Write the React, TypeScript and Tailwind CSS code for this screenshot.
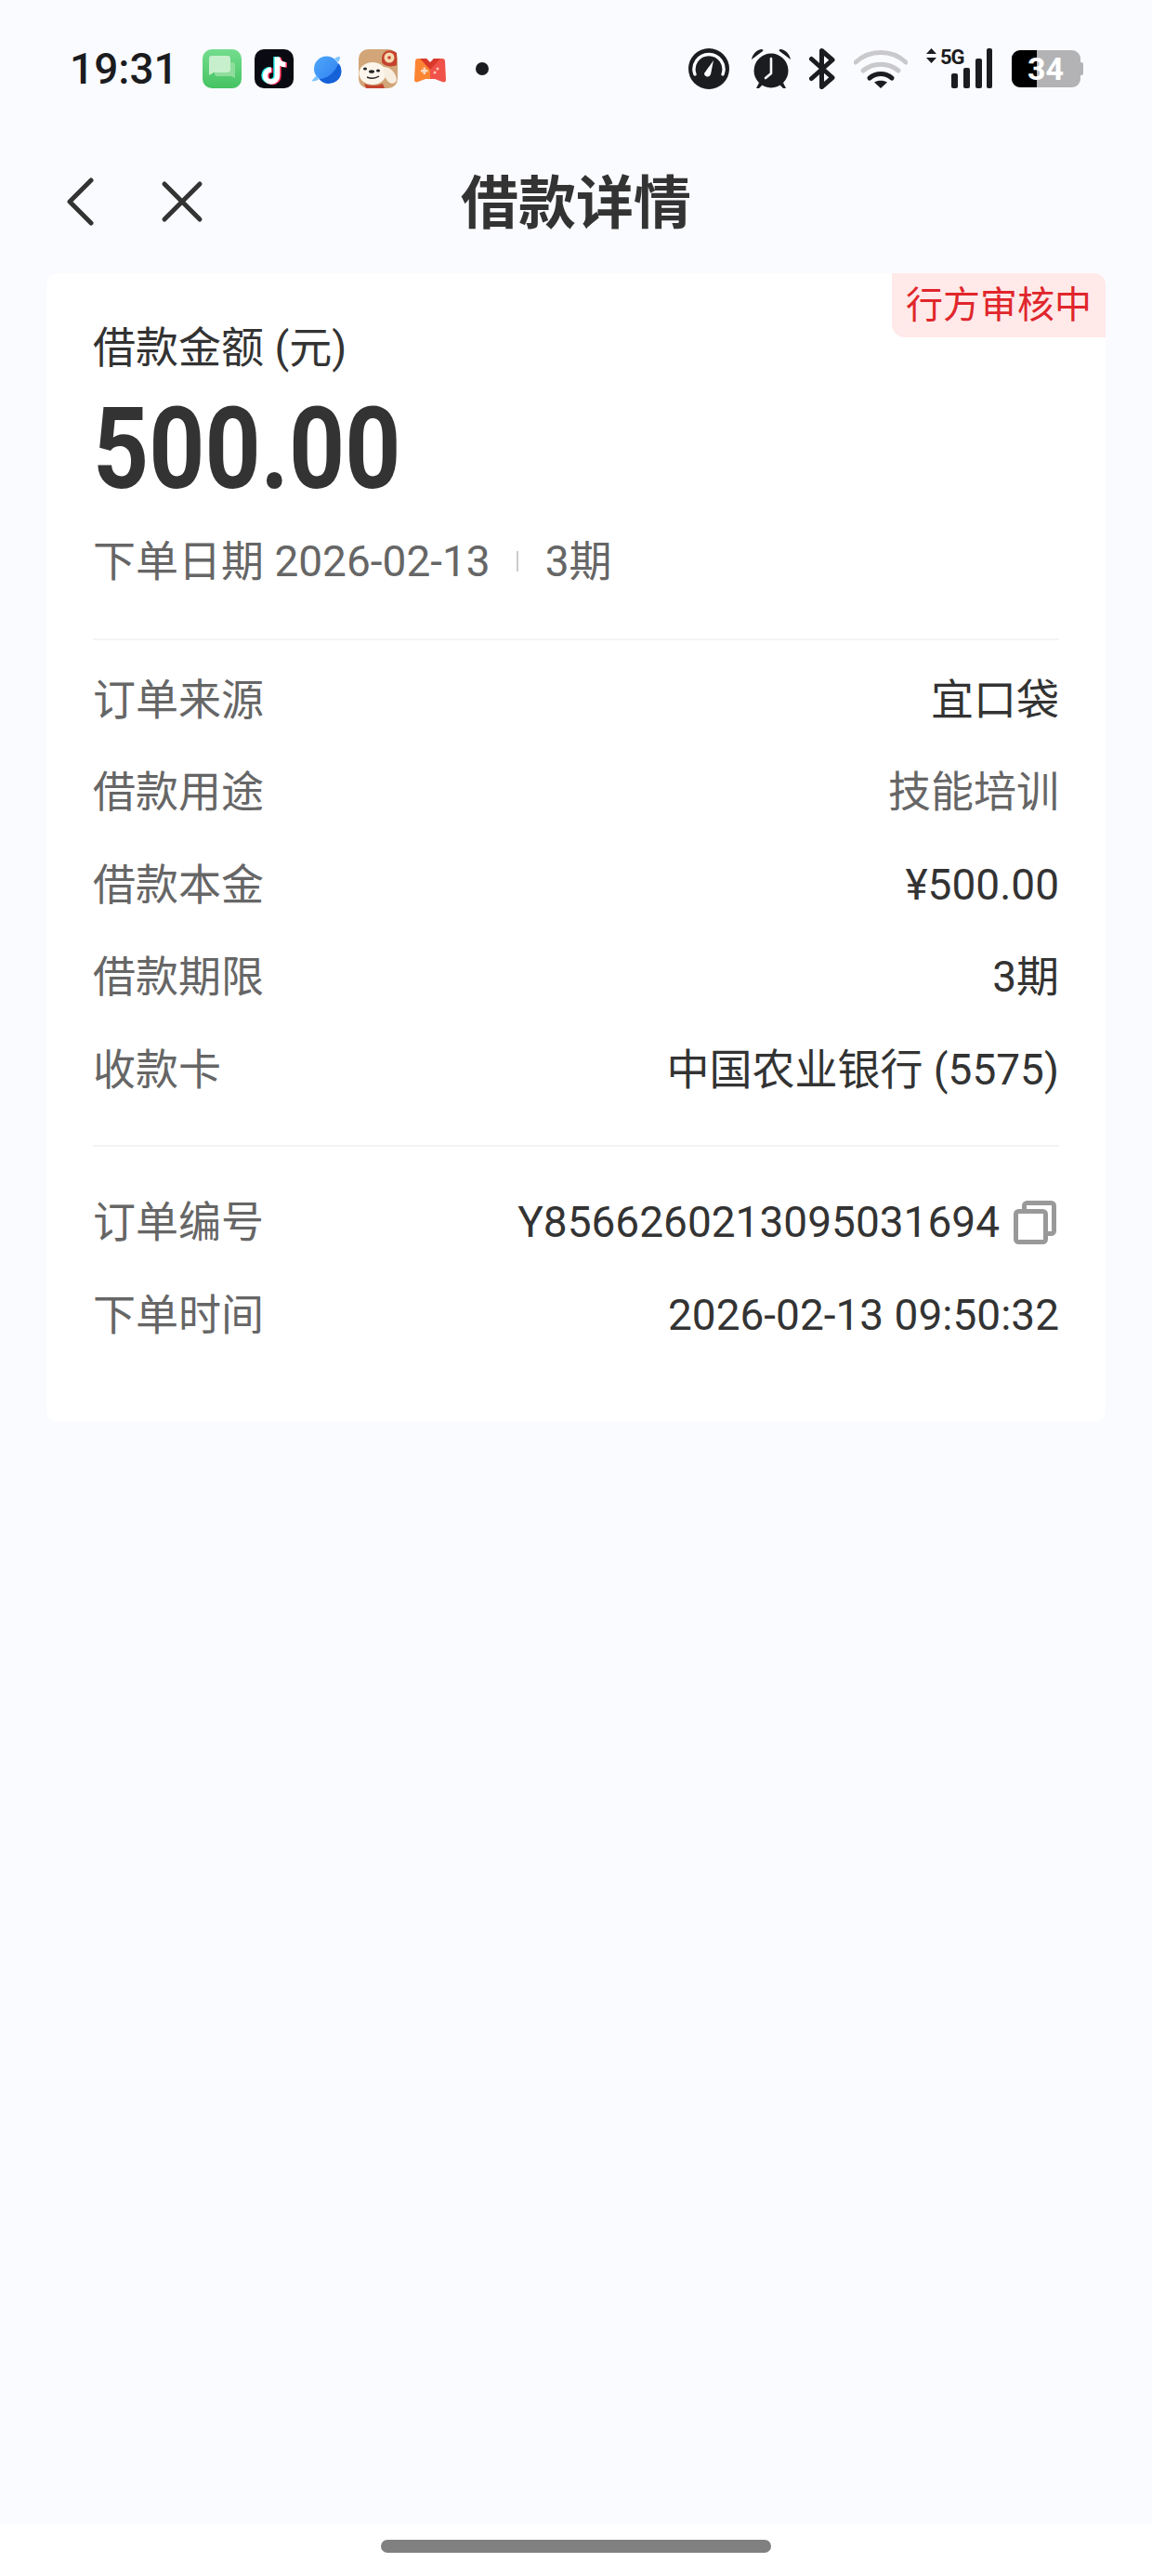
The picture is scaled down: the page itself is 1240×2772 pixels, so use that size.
import { ReactNode } from "react"

const fontStack = "font-['Roboto','Noto_Sans_CJK_SC',sans-serif]"

function AppIcons() {
  return (
    <div className="ml-[26px] flex items-center gap-[14px]">
      {/* Messages */}
      <svg width="42" height="42" viewBox="0 0 42 42">
        <defs>
          <linearGradient id="msg" x1="0" y1="0" x2="0" y2="1">
            <stop offset="0" stopColor="#74dd8e" />
            <stop offset="1" stopColor="#45c362" />
          </linearGradient>
          <linearGradient id="planet" x1="0" y1="0" x2="1" y2="1">
            <stop offset="0" stopColor="#4fa8fb" />
            <stop offset="1" stopColor="#2f7ff0" />
          </linearGradient>
        </defs>
        <rect width="42" height="42" rx="10" fill="url(#msg)" />
        <path d="M29 14h3a3 3 0 0 1 3 3v14l-4-2H16a3 3 0 0 1-3-3v-1h16z" fill="#8fdd9c" />
        <path d="M10 7h17a3 3 0 0 1 3 3v12a3 3 0 0 1-3 3H12l-5 3V10a3 3 0 0 1 3-3z" fill="#c7efcc" />
      </svg>
      {/* TikTok */}
      <svg width="42" height="42" viewBox="0 0 42 42" fill="none" strokeWidth="5.5">
        <rect width="42" height="42" rx="10" fill="#0a0b12" />
        <path d="M23 8v20a6.5 6.5 0 1 1-6.5-6.5M23 8c.5 5 4 8 9 8" stroke="#25f4ee" />
        <path d="M26 9v20a6.5 6.5 0 1 1-6.5-6.5M26 9c.5 5 4 8 9 8" stroke="#fe2c55" />
        <path d="M24.5 8.5v20a6.5 6.5 0 1 1-6.5-6.5M24.5 8.5c.5 5 4 8 9 8" stroke="#ffffff" />
      </svg>
      {/* Browser planet */}
      <svg width="42" height="42" viewBox="0 0 42 42">
        <circle cx="21.5" cy="21" r="13.5" fill="url(#planet)" />
        <path d="M34.5 15a13.5 13.5 0 0 1-21 17c9 0 17-7 21-17z" fill="#1461d8" />
        <path d="M30 10c3-2 6-3 6-1s-1 3-2 5zM11 28c-3 3-5 5-5 6s3 0 7-1z" fill="#7cc4ff" />
      </svg>
      {/* JD dog */}
      <svg width="42" height="42" viewBox="0 0 42 42">
        <rect width="42" height="42" rx="10" fill="#d2a678" />
        <path d="M25 14c2 4 10 6 16 3V4c-6-5-16-3-16 6z" fill="#c4432e" />
        <circle cx="33" cy="9" r="5.5" fill="#f6d9b0" />
        <circle cx="33" cy="9" r="1.8" fill="#c4432e" />
        <ellipse cx="15" cy="26" rx="14.5" ry="12" fill="#fbf5ec" />
        <path d="M27 19c7 0 13 6 14 14-1 4-6 5-9 2-3-3-6-10-5-16z" fill="#f7eee0" />
        <ellipse cx="7" cy="21" rx="2" ry="1.5" fill="#222" />
        <ellipse cx="21" cy="23" rx="2" ry="1.5" fill="#222" />
        <ellipse cx="14" cy="24" rx="3" ry="1.8" fill="#222" />
        <path d="M9 30q7 3 13-1" fill="none" stroke="#222" strokeWidth="1.5" />
        <path d="M6 37q10 4 20 0l2 5H8z" fill="#c4432e" />
      </svg>
      {/* Game center */}
      <svg width="42" height="42" viewBox="0 0 42 42">
        <path d="M8 10h9l4 5v17h-5l-8 3c-2 1-4 0-4-2l1-20c0-2 1-3 3-3z" fill="#fb8433" />
        <path d="M34 10h-9l-4 5v17h5l8 3c2 1 4 0 4-2l-1-20c0-2-1-3-3-3z" fill="#f0524a" />
        <path d="M10 10h7l4 4 4-4h7L21 22z" fill="#d9382a" />
        <path d="M11 22h2.5v-2.5h2.5V22h2.5v2.5H16V27h-2.5v-2.5H11z" fill="#ffd9c2" />
        <circle cx="29" cy="21" r="1.5" fill="#ffc4b5" />
        <circle cx="26" cy="25" r="1.5" fill="#ffc4b5" />
      </svg>
      <div className="ml-[14px] h-[14px] w-[14px] rounded-full bg-[#1b1c20]" />
    </div>
  )
}

function SystemIcons() {
  return (
    <div className="flex items-center">
      {/* Gauge */}
      <svg width="44" height="44" viewBox="0 0 44 44">
        <circle cx="22" cy="22" r="22" fill="#1b1c20" />
        <path d="M7 28a16 16 0 1 1 30 0" fill="none" stroke="#fafbff" strokeWidth="3.4" strokeLinecap="round" />
        <path d="M27 13l-3 15a3.6 3.6 0 0 1-7-1z" fill="#fafbff" />
      </svg>
      {/* Alarm */}
      <svg className="ml-[23px]" width="44" height="44" viewBox="0 0 44 44">
        <circle cx="22" cy="24" r="18.5" fill="#1b1c20" />
        <path d="M1 12C2 6 7 1 12 1c1 0 2 1 1 2zM43 12C42 6 37 1 32 1c-1 0-2 1-1 2z" fill="#1b1c20" />
        <path d="M9 37l-3 6h3l4-4zM35 37l3 6h-3l-4-4z" fill="#1b1c20" />
        <path d="M22 11v16l-6 5" fill="none" stroke="#fafbff" strokeWidth="2.6" strokeLinecap="round" strokeLinejoin="round" />
      </svg>
      {/* Bluetooth */}
      <svg className="ml-[19px]" width="28" height="44" viewBox="0 0 28 44">
        <path d="M2.5 11.5L25 31.5 13.5 41.5V2.5L25 12.5 2.5 32.5" fill="none" stroke="#1b1c20" strokeWidth="5" strokeLinecap="round" strokeLinejoin="round" />
      </svg>
      {/* Wifi */}
      <svg className="ml-[20px]" width="58" height="42" viewBox="0 0 58 42">
        <path d="M2 14C17 0 41 0 56 14" fill="none" stroke="#c9c9cb" strokeWidth="5" strokeLinecap="round" />
        <path d="M10 23c11-9 27-9 38 0" fill="none" stroke="#c9c9cb" strokeWidth="5" strokeLinecap="round" />
        <path d="M17 31c7-6 17-6 24 0" fill="none" stroke="#1b1c20" strokeWidth="5" strokeLinecap="round" />
        <path d="M22 35.5c4-2.5 10-2.5 14 0L29 42z" fill="#1b1c20" />
      </svg>
      {/* 5G signal */}
      <svg className="mb-[6px] ml-[20px]" width="72" height="50" viewBox="0 -6 72 50">
        <path d="M5.5 0l5.5 6H0zM5.5 16l5.5-6H0z" fill="#1b1c20" />
        <text x="15" y="17" fontFamily="Roboto" fontWeight="700" fontSize="22" letterSpacing="-1" fill="#1b1c20">5G</text>
        <rect x="27" y="27" width="7" height="16" rx="2" fill="#1b1c20" />
        <rect x="40" y="21" width="7" height="22" rx="2" fill="#1b1c20" />
        <rect x="53" y="11" width="7" height="32" rx="2" fill="#1b1c20" />
        <rect x="65" y="0" width="6" height="43" rx="2" fill="#1b1c20" />
      </svg>
      {/* Battery */}
      <div className="relative ml-[20px] flex h-[40px] w-[77px] items-center">
        <div className="flex h-[40px] w-[74px] overflow-hidden rounded-[9px] bg-[#b3b3b5]">
          <div className="h-full w-[27px] bg-black" />
        </div>
        <div className="h-[14px] w-[3px] rounded-r-[2px] bg-[#b3b3b5]" />
        <span className="absolute left-[17px] top-0 text-[34px] leading-[40px] font-bold text-white font-['Roboto',sans-serif]">34</span>
      </div>
    </div>
  )
}

function Row({ label, children, muted }: { label: string; children: ReactNode; muted?: boolean }) {
  return (
    <div className="flex h-[99.5px] items-center justify-between">
      <span className="text-[#666666]">{label}</span>
      <span className={muted ? "flex items-center text-[#666666]" : "flex items-center text-[#333333]"}>{children}</span>
    </div>
  )
}

export default function App() {
  return (
    <div className={`flex h-[2772px] w-[1240px] flex-col overflow-hidden bg-[#fafbff] ${fontStack}`}>
      {/* Status bar */}
      <header className="flex h-[148px] items-center justify-between pl-[75px] pr-[74px]">
        <div className="flex items-center">
          <span className="text-[46px] leading-none font-medium text-[#1b1c20] font-['Roboto',sans-serif]">19:31</span>
          <AppIcons />
        </div>
        <SystemIcons />
      </header>

      {/* Nav bar */}
      <nav className="grid h-[146px] grid-cols-[1fr_auto_1fr] items-center px-[70px] pb-[2px]">
        <div className="mb-[6px] flex items-center gap-[71px]">
          <svg width="32" height="52" viewBox="0 0 32 52" fill="none" stroke="#333333" strokeWidth="5" strokeLinecap="round" strokeLinejoin="round">
            <path d="M28 3L5 26l23 23" />
          </svg>
          <svg width="46" height="46" viewBox="0 0 46 46" fill="none" stroke="#333333" strokeWidth="5" strokeLinecap="round">
            <path d="M4 4l38 38M42 4L4 42" />
          </svg>
        </div>
        <h1 className="text-[62px] leading-none font-bold text-[#333333]">借款详情</h1>
        <div />
      </nav>

      {/* Detail card */}
      <main className="flex-1 px-[50px]">
        <section className="relative h-[1236px] rounded-[12px] bg-white px-[50px] pt-[57px] text-[46px] leading-none">
          <span className="absolute right-0 top-0 flex h-[69px] w-[230px] items-center justify-center rounded-tr-[12px] rounded-bl-[14px] bg-[#ffe9e9] text-[40px] text-[#e0262c]">
            行方审核中
          </span>
          <p className="text-[#333333]">借款金额 (元)</p>
          <p className="mt-[26px] origin-left scale-x-[0.86] text-[122px] leading-[122px] font-bold text-[#333333]">500.00</p>
          <div className="mt-[36px] flex items-center text-[#666666]">
            <span>下单日期 2026-02-13</span>
            <span className="ml-[28px] mr-[29px] h-[22px] w-[2px] bg-[#cccccc]" />
            <span>3期</span>
          </div>

          <div className="mt-[60px] border-t-2 border-[#f4f4f4] py-[14px]">
            <Row label="订单来源">宜口袋</Row>
            <Row label="借款用途" muted>技能培训</Row>
            <Row label="借款本金">¥500.00</Row>
            <Row label="借款期限">3期</Row>
            <Row label="收款卡">中国农业银行 (5575)</Row>
          </div>

          <div className="mt-[17px] border-t-2 border-[#f4f4f4] py-[32px]">
            <Row label="订单编号">
              Y8566260213095031694
              <svg className="ml-[15px] mr-[3px]" width="46" height="47" viewBox="0 0 46 47" fill="none" stroke="#999999" strokeWidth="5" strokeLinejoin="round">
                <rect x="2.5" y="11.5" width="32" height="33" rx="3" />
                <path d="M11.5 11.5V5.5a3 3 0 0 1 3-3h26a3 3 0 0 1 3 3v27a3 3 0 0 1-3 3h-6" />
              </svg>
            </Row>
            <Row label="下单时间">2026-02-13 09:50:32</Row>
          </div>
        </section>
      </main>

      {/* Gesture bar */}
      <footer className="flex h-[56px] justify-center bg-white pt-[17px]">
        <div className="h-[14px] w-[420px] rounded-full bg-[#808080]" />
      </footer>
    </div>
  )
}
